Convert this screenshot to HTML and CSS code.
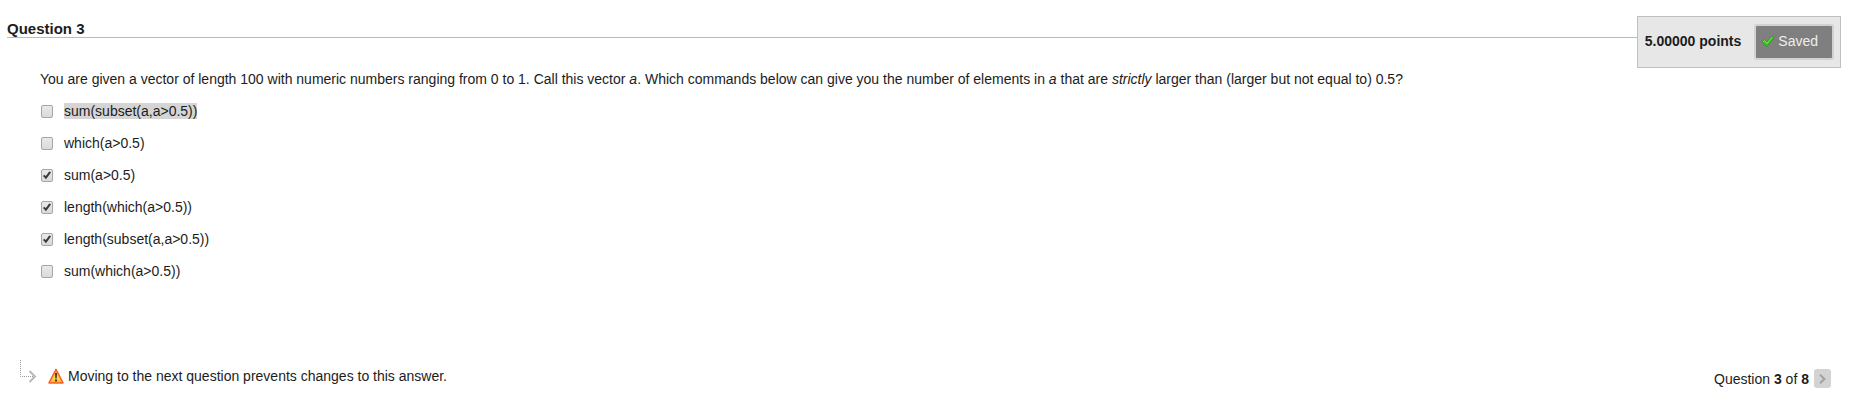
FILE: index.html
```html
<!DOCTYPE html>
<html lang="en">
<head>
<meta charset="utf-8">
<title>Question 3</title>
<link rel="stylesheet" href="styles.css">
</head>
<body>
<main class="question">
  <header class="question-header">
    <h1 class="question-title">Question 3</h1>
    <div class="points-box">
      <span class="points">5.00000 points</span>
      <button class="save-button" type="button">
        <svg class="save-icon" width="14" height="12" viewBox="0 0 14 12" aria-hidden="true">
          <path d="M1 7 L3.500 4.500 L6 7 L11.500 1 L13 2.500 L6.500 11 L5 11 Z" fill="#39c81e" stroke="#2b8f1b" stroke-width=".7"/>
          <path d="M2.300 6.600 L3.600 5.600 L6 8.200 L11.500 2.100" fill="none" stroke="#7bee51" stroke-width="1"/>
        </svg>
        <span>Saved</span>
      </button>
    </div>
  </header>
  <form class="question-body">
    <p class="prompt">You are given a vector of length 100 with numeric numbers ranging from 0 to 1. Call this vector <em>a</em>. Which commands below can give you the number of elements in <em>a</em> that are <em>strictly</em> larger than (larger but not equal to) 0.5?</p>
    <ul class="options">
      <li class="option"><span class="check"><input class="check-input" type="checkbox" id="o1"></span><label for="o1"><mark class="highlight">sum(subset(a,a&gt;0.5))</mark></label></li>
      <li class="option"><span class="check"><input class="check-input" type="checkbox" id="o2"></span><label for="o2">which(a&gt;0.5)</label></li>
      <li class="option"><span class="check"><input class="check-input" type="checkbox" id="o3" checked><svg class="tick" viewBox="0 0 12 12" aria-hidden="true"><path d="M2.700 6.400 L4.900 8.600 L9.200 2.800"/></svg></span><label for="o3">sum(a&gt;0.5)</label></li>
      <li class="option"><span class="check"><input class="check-input" type="checkbox" id="o4" checked><svg class="tick" viewBox="0 0 12 12" aria-hidden="true"><path d="M2.700 6.400 L4.900 8.600 L9.200 2.800"/></svg></span><label for="o4">length(which(a&gt;0.5))</label></li>
      <li class="option"><span class="check"><input class="check-input" type="checkbox" id="o5" checked><svg class="tick" viewBox="0 0 12 12" aria-hidden="true"><path d="M2.700 6.400 L4.900 8.600 L9.200 2.800"/></svg></span><label for="o5">length(subset(a,a&gt;0.5))</label></li>
      <li class="option"><span class="check"><input class="check-input" type="checkbox" id="o6"></span><label for="o6">sum(which(a&gt;0.5))</label></li>
    </ul>
  </form>
  <footer class="question-footer">
    <div class="notice">
      <svg class="notice-arrow" width="18" height="24" viewBox="0 0 18 24" aria-hidden="true">
        <path d="M1.500 0 V16.500 H15" fill="none" stroke="#999" stroke-dasharray="1 1"/>
        <path d="M10.500 11 L16 16.500 L10.500 22" fill="none" stroke="#b5b5b5" stroke-width="1.800"/>
      </svg>
      <svg class="notice-icon" width="16" height="16" viewBox="0 0 16 16" aria-hidden="true">
        <defs><linearGradient id="amber" x1="0" y1="0" x2="0" y2="1"><stop offset="0" stop-color="#ffb52e"/><stop offset=".7" stop-color="#ffd84a"/><stop offset="1" stop-color="#ffa51f"/></linearGradient></defs>
        <path d="M8 1.300 L15 14.900 H1 Z" fill="url(#amber)" stroke="#f8602c" stroke-width="1.500" stroke-linejoin="round"/>
        <path d="M7 5 H9 L8.700 10.500 H7.300 Z M7 11.600 H9 V13.600 H7 Z" fill="#3e3a28"/>
      </svg>
      <span>Moving to the next question prevents changes to this answer.</span>
    </div>
    <nav class="pager">
      <span>Question <b>3</b> of <b>8</b></span>
      <button class="next-button" type="button" aria-label="Next question">
        <svg width="7" height="10" viewBox="0 0 7 10" aria-hidden="true"><path d="M1 .8 L5.500 5 L1 9.200" fill="none" stroke="#a0a0a0" stroke-width="1.900"/></svg>
      </button>
    </nav>
  </footer>
</main>
</body>
</html>
```
FILE: styles.css
```css
body {
  margin: 0;
  background: #fff;
  color: #1c1c1c;
  font-family: "Liberation Sans", Arial, sans-serif;
  font-size: 14px;
  line-height: 16px;
}

.question {
  padding: 16px 35px 16px 7px;
}

.question-header {
  display: flex;
  align-items: flex-start;
}

.question-title {
  flex: 1;
  margin: 0;
  padding: 5px 0 0;
  border-bottom: 1px solid #bbb;
  font-size: 15px;
  line-height: 16px;
}

.points-box {
  display: flex;
  align-items: flex-start;
  gap: 13px;
  padding: 7px 6px 7px 7px;
  border: 1px solid #c0c0c0;
  background: #e7e7e7;
}

.points {
  font-weight: bold;
  line-height: 34px;
}

.save-button {
  display: flex;
  align-items: center;
  gap: 3px;
  height: 36px;
  padding: 0 14px 2px 5px;
  border: 2px solid #d2d2d2;
  border-radius: 3px;
  background: #7f7f7f;
  color: #eee;
  font: inherit;
}

.question-body {
  padding: 3px 0 0 33px;
}

.prompt {
  margin: 0;
}

.options {
  margin: 8px 0 0;
  padding: 0;
  list-style: none;
}

.option {
  display: flex;
  align-items: center;
  gap: 11px;
  height: 32px;
}

.check {
  position: relative;
  width: 12px;
  height: 13px;
  padding: 1px 0 0 1px;
}

.check-input {
  appearance: none;
  display: block;
  box-sizing: border-box;
  width: 12px;
  height: 13px;
  margin: 0;
  border: 1px solid #a6a6a6;
  border-radius: 2px;
  background: linear-gradient(#e9e9e9, #dadada);
}

.tick {
  position: absolute;
  inset: 1px 0 0 1px;
  fill: none;
  stroke: #3c3c3c;
  stroke-width: 2;
  pointer-events: none;
}

.highlight {
  background: #d5d5d5;
  color: inherit;
}

.question-footer {
  display: flex;
  justify-content: space-between;
  align-items: flex-start;
  padding-top: 72px;
}

.notice {
  display: flex;
  align-items: flex-start;
  margin-left: 12px;
  line-height: 34px;
}

.notice-arrow {
  margin-top: 1px;
}

.notice-icon {
  margin: 9px 4px 0 11px;
}

.pager {
  display: flex;
  align-items: center;
  gap: 5px;
  margin: 10px 10px 0 0;
}

.next-button {
  display: flex;
  align-items: center;
  justify-content: center;
  width: 17px;
  height: 19px;
  padding: 0;
  border: 0;
  border-radius: 3px;
  background: #d3d3d3;
}
```
